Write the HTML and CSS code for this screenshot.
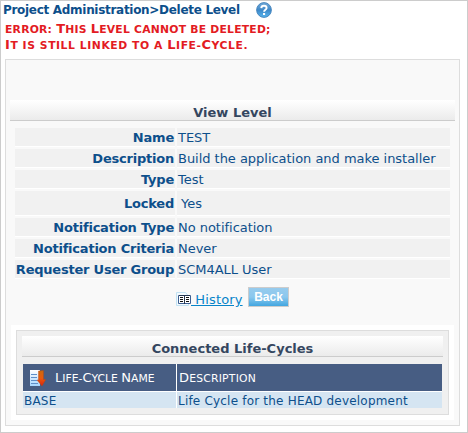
FILE: index.html
```html
<!DOCTYPE html>
<html lang="en">
<head>
<meta charset="utf-8">
<title>Delete Level</title>
<link rel="stylesheet" href="styles.css">
</head>
<body>
<main class="page">
  <header class="crumbs">
    <h1 class="title">Project Administration&gt;Delete Level</h1>
    <svg class="help" viewBox="0 0 16 16" aria-hidden="true">
      <defs><linearGradient id="ball" x1="0" y1="0" x2="0" y2="1"><stop offset="0" stop-color="#75abd9"/><stop offset=".5" stop-color="#3e88c8"/><stop offset="1" stop-color="#58b5ee"/></linearGradient></defs>
      <circle cx="8" cy="8" r="7.4" fill="url(#ball)" stroke="#4382bb" stroke-width=".9"/>
      <path d="M5.3 6.1C5.4 2.9 10.6 3 10.6 6C10.6 7.9 8.1 7.7 8.1 9.8" fill="none" stroke="#fff" stroke-width="1.9"/>
      <rect x="7" y="11" width="2.1" height="2" fill="#fff"/>
    </svg>
  </header>
  <p class="error caps"><span class="what">error: <b>T</b>his <b>L</b>evel cannot be deleted;</span><br><span class="why"><b>I</b>t is still linked to a <b>L</b>ife-<b>C</b>ycle.</span></p>

  <section class="panel">
    <h2 class="bar">View Level</h2>
    <dl class="fields">
      <dt>Name</dt><dd>TEST</dd>
      <dt>Description</dt><dd>Build the application and make installer</dd>
      <dt>Type</dt><dd>Test</dd>
      <dt class="tall">Locked</dt><dd class="tall indent">Yes</dd>
      <dt>Notification Type</dt><dd>No notification</dd>
      <dt>Notification Criteria</dt><dd>Never</dd>
      <dt>Requester User Group</dt><dd>SCM4ALL User</dd>
    </dl>
    <div class="actions">
      <svg class="book" viewBox="0 0 15 14" aria-hidden="true">
        <path d="M.5 13.5V.5H9.5L12.5 4V13.5Z" fill="#f2f9fd" stroke="#c3e2f3"/>
        <path d="M2.500 3.500H14.500V11.500H2.500Z" fill="#fff" stroke="#3d5f92"/>
        <path d="M3 3.500H14M8.500 3V12" stroke="#26364f"/>
        <path d="M4 5.500H7M4 7.500H7M4 9.500H7M10 5.500H13M10 7.500H13M10 9.500H13" stroke="#111"/>
      </svg>
      <a class="history" href="#">&nbsp;History</a>
      <button class="back" type="button">Back</button>
    </div>
    <div class="well">
      <section class="connected">
        <h2 class="bar">Connected Life-Cycles</h2>
        <div class="grid">
          <div class="th first">
            <svg class="sort" viewBox="0 0 16 18" aria-hidden="true">
              <defs><linearGradient id="arrow" x1="0" y1="0" x2="0" y2="1"><stop offset="0" stop-color="#c76a10"/><stop offset=".5" stop-color="#e8590c"/><stop offset="1" stop-color="#d92410"/></linearGradient><linearGradient id="sheet" x1="0" y1="0" x2="0" y2="1"><stop offset="0" stop-color="#fff"/><stop offset="1" stop-color="#a6d5ff"/></linearGradient></defs>
              <path d="M0 1H10V17H0Z" fill="url(#sheet)"/>
              <path d="M1 5.500H7M1 8.500H7M1 11.500H7M1 14.500H8" stroke="#5f8fc8"/>
              <path d="M8.500 2L13.500 1.500V10.500H15.800L12 17L7 11H8.500Z" fill="url(#arrow)" stroke="#b5430f" stroke-width=".4"/>
            </svg>
            <span class="caps"><b>L</b>ife-<b>C</b>ycle <b>N</b>ame</span>
          </div>
          <div class="th"><span class="caps wide"><b>D</b>escription</span></div>
          <div class="td">BASE</div>
          <div class="td">Life Cycle for the HEAD development</div>
        </div>
      </section>
    </div>
  </section>
</main>
</body>
</html>
```
FILE: styles.css
```css
* { box-sizing: border-box; }
body { margin: 0; background: #fff; }
.page {
  height: 433px;
  padding: 0 7px 0 4px;
  border: 1px solid #ccc;
  font: 13px/16px Verdana, "DejaVu Sans", sans-serif;
  color: #0d4f8b;
}
h1, h2, p, dl, dd { margin: 0; }
.crumbs { display: flex; height: 21px; margin-left: -2px; }
.title { width: 253px; font-size: 12px; line-height: 18px; white-space: nowrap; letter-spacing: -0.3px; }
.help { width: 16px; height: 16px; margin-top: 1px; }
.caps { font-size: 10.8px; text-transform: uppercase; }
.caps b { font-size: 13px; font-weight: inherit; line-height: 1; }
.error { height: 37px; font-weight: bold; color: #e31b23; white-space: nowrap; }
.what { letter-spacing: 0.22px; }
.why { letter-spacing: 0.55px; }
.wide { letter-spacing: 0.2px; }
.panel { height: 367px; padding: 40px 4px 0; border: 1px solid #ddd; background: #f9f9f9; }
.bar {
  height: 21px;
  border-bottom: 1px solid #ccc;
  background: linear-gradient(#fff, #ebebeb);
  color: #34465f;
  font-size: 13px;
  line-height: 25px;
  text-align: center;
}
.fields { display: grid; grid-template-columns: 160px 273px; gap: 2px; margin: 7px 5px 0; white-space: nowrap; }
.fields dt, .fields dd { height: 19px; border-bottom: 1px solid #fff; background: #f1f1f1; line-height: 19px; }
.fields dt { padding-right: 1px; font-weight: bold; text-align: right; letter-spacing: -0.22px; }
.fields dd { padding-left: 1px; letter-spacing: -0.03px; }
.fields .tall { height: 25px; line-height: 25px; }
.fields .indent { padding-left: 4px; }
.actions { display: flex; height: 46px; padding: 8px 0 0 166px; }
.book { width: 15px; height: 14px; margin-top: 5px; }
.history { width: 57px; margin-top: 5px; color: #0784c9; letter-spacing: 0.15px; }
.back {
  width: 41px;
  height: 20px;
  padding: 0;
  border: 1px solid #ccc;
  background: linear-gradient(#97cbed, #8bc8ee 50%, #42a6e0);
  color: #fff;
  font: bold 12px/17px "Liberation Sans", Arial, sans-serif;
}
.well { height: 95px; margin: 0 1px; padding: 5px; background: #fff; }
.connected { height: 85px; padding: 5px; border: 1px solid #ddd; background: #f0f0f0; }
.grid { display: grid; grid-template-columns: 153px 265px; grid-template-rows: 27px 16px; gap: 1px; margin: 7px 1px 0; background: #fff; white-space: nowrap; }
.th { display: flex; padding-left: 2px; background: #475d83; color: #fff; line-height: 29px; }
.th.first { padding-left: 7px; }
.sort { width: 16px; height: 18px; margin: 5px 9px 0 0; }
.td { padding-left: 1px; background: #d5e5f2; font-size: 12px; line-height: 18px; letter-spacing: 0.2px; }
```
